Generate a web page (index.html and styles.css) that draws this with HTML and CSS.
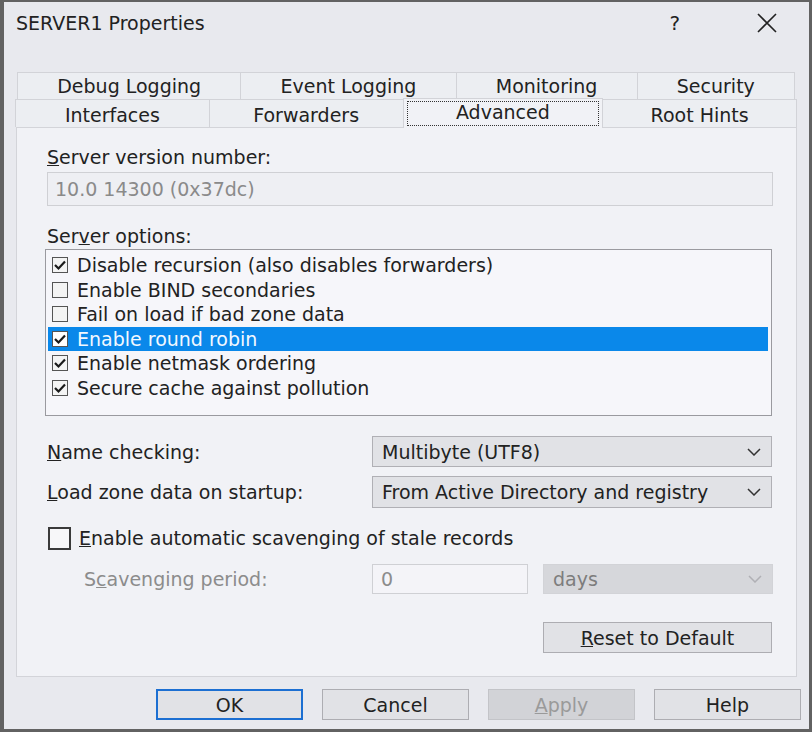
FILE: index.html
```html
<!DOCTYPE html>
<html lang="en">
<head>
    <meta charset="UTF-8">
    <title>SERVER1 Properties</title>
    <link rel="stylesheet" href="styles.css">
</head>
<body>
    <div class="window">
        <div class="titlebar">
            <span class="title">SERVER1 Properties</span>
            <span class="title-help">?</span>
            <span class="title-close">
                <svg width="22" height="22" viewBox="0 0 22 22"><path d="M2 2 L20 20 M20 2 L2 20" stroke="#222" stroke-width="1.6" fill="none"/></svg>
            </span>
        </div>

        <div class="tabs">
            <div class="tab-row back">
                <div class="tab">Debug Logging</div>
                <div class="tab">Event Logging</div>
                <div class="tab">Monitoring</div>
                <div class="tab">Security</div>
            </div>
            <div class="tab-row front">
                <div class="tab">Interfaces</div>
                <div class="tab">Forwarders</div>
                <div class="tab selected"><span class="focus-ring">Advanced</span></div>
                <div class="tab">Root Hints</div>
            </div>
        </div>

        <div class="panel">
            <div class="field-label"><u>S</u>erver version number:</div>
            <div class="version-box">10.0 14300 (0x37dc)</div>

            <div class="field-label options-label">Ser<u>v</u>er options:</div>
            <div class="option-list">
                <div class="option"><span class="cb checked"><svg width="14" height="14" viewBox="0 0 14 14"><path d="M2 7 L5.5 10.5 L12 3.5" stroke="#1a1a1a" stroke-width="2.2" fill="none"/></svg></span>Disable recursion (also disables forwarders)</div>
                <div class="option"><span class="cb"></span>Enable BIND secondaries</div>
                <div class="option"><span class="cb"></span>Fail on load if bad zone data</div>
                <div class="option active"><span class="cb checked"><svg width="14" height="14" viewBox="0 0 14 14"><path d="M2 7 L5.5 10.5 L12 3.5" stroke="#1a1a1a" stroke-width="2.2" fill="none"/></svg></span>Enable round robin</div>
                <div class="option"><span class="cb checked"><svg width="14" height="14" viewBox="0 0 14 14"><path d="M2 7 L5.5 10.5 L12 3.5" stroke="#1a1a1a" stroke-width="2.2" fill="none"/></svg></span>Enable netmask ordering</div>
                <div class="option"><span class="cb checked"><svg width="14" height="14" viewBox="0 0 14 14"><path d="M2 7 L5.5 10.5 L12 3.5" stroke="#1a1a1a" stroke-width="2.2" fill="none"/></svg></span>Secure cache against pollution</div>
            </div>

            <div class="form-row first">
                <span class="row-label"><u>N</u>ame checking:</span>
                <div class="combo">
                    <span>Multibyte (UTF8)</span>
                    <svg class="chevron" width="14" height="8" viewBox="0 0 14 8"><path d="M1 1 L7 7 L13 1" stroke="#333" stroke-width="1.5" fill="none"/></svg>
                </div>
            </div>
            <div class="form-row second">
                <span class="row-label"><u>L</u>oad zone data on startup:</span>
                <div class="combo">
                    <span>From Active Directory and registry</span>
                    <svg class="chevron" width="14" height="8" viewBox="0 0 14 8"><path d="M1 1 L7 7 L13 1" stroke="#333" stroke-width="1.5" fill="none"/></svg>
                </div>
            </div>

            <div class="scavenge-check">
                <span class="big-cb"></span><u>E</u>nable automatic scavenging of stale records
            </div>

            <div class="form-row scavenge">
                <span class="row-label muted">S<u>c</u>avenging period:</span>
                <div class="period-box">0</div>
                <div class="combo disabled">
                    <span>days</span>
                    <svg class="chevron" width="14" height="8" viewBox="0 0 14 8"><path d="M1 1 L7 7 L13 1" stroke="#b0b0b5" stroke-width="1.5" fill="none"/></svg>
                </div>
            </div>

            <button class="btn reset-button"><u>R</u>eset to Default</button>
        </div>

        <div class="footer">
            <button class="btn default">OK</button>
            <button class="btn">Cancel</button>
            <button class="btn disabled"><u>A</u>pply</button>
            <button class="btn">Help</button>
        </div>
    </div>
</body>
</html>
```

FILE: styles.css
```css
* {
    box-sizing: border-box;
}

body {
    margin: 0;
    background-color: #5f5f5f;
    font-family: "DejaVu Sans", sans-serif;
    font-size: 19px;
    color: #222;
}

.window {
    width: 812px;
    height: 732px;
    border: 3px solid #626262;
    border-top-width: 2px;
    border-left-width: 4px;
    background-color: #e8e9ee;
    display: flex;
    flex-direction: column;
}

.titlebar {
    height: 42px;
    display: flex;
    align-items: center;
    padding-left: 12px;
}

.title {
    flex: 1;
    font-size: 19px;
}

.title-help {
    font-size: 20px;
    margin-right: 76px;
}

.title-close {
    display: flex;
    margin-right: 31px;
}

/* tabs */
.tabs {
    margin: 28px 12px 0 12px;
}

.tab-row {
    display: flex;
}

.tab-row.back {
    height: 27px;
    margin: 0 2px;
}

.tab-row.front {
    height: 28px;
}

.tab {
    flex: 1 1 auto;
    display: flex;
    align-items: center;
    justify-content: center;
    border: 1px solid #d2d3d8;
    border-bottom: none;
    margin-left: -1px;
    background-color: #eceef2;
}

.tab-row.back .tab {
    padding: 0 2px;
}

.tab-row.front .tab {
    flex: 1 1 0;
    padding-top: 2px;
}

.tab.selected {
    background-color: #f1f2f6;
    margin-top: -1px;
    margin-bottom: -1px;
    padding: 1px 3px 2px;
    position: relative;
    z-index: 1;
}

.focus-ring {
    flex: 1;
    height: 100%;
    display: flex;
    align-items: center;
    justify-content: center;
    border: 1px dotted #333;
    padding-bottom: 3px;
}

/* panel */
.panel {
    margin: 0 12px 0 12px;
    height: 550px;
    border: 1px solid #d3d4d9;
    background-color: #f1f2f6;
    padding: 18px 23px 0 30px;
    display: flex;
    flex-direction: column;
}

.field-label {
    line-height: 22px;
}

.version-box {
    margin-top: 4px;
    height: 34px;
    border: 1px solid #cfd0d4;
    background-color: #eeeff3;
    color: #8a8a8a;
    padding-left: 7px;
    display: flex;
    align-items: center;
}

.options-label {
    margin-top: 19px;
}

.option-list {
    margin: 2px 1px 0 -2px;
    height: 167px;
    border: 1px solid #9a9a9f;
    background-color: #f6f6fa;
    padding: 3px 3px 0 2px;
}

.option {
    height: 24.5px;
    display: flex;
    align-items: center;
    padding-left: 4px;
    font-size: 19px;
}

.option.active {
    background-color: #0a88ea;
    color: #f2f8ff;
}

.cb {
    width: 16px;
    height: 16px;
    border: 1px solid #555;
    background-color: #f4f4f4;
    margin-right: 9px;
    display: flex;
    align-items: center;
    justify-content: center;
}

.option.active .cb {
    background-color: #fff;
}

.form-row {
    display: flex;
    align-items: center;
}

.form-row.first {
    margin-top: 20px;
}

.form-row.second {
    margin-top: 9px;
}

.row-label {
    width: 325px;
}

.muted {
    color: #8c8c8c;
    padding-left: 37px;
}

.combo {
    flex: 1;
    height: 31px;
    margin-right: 1px;
    border: 1px solid #b0b0b5;
    background-color: #e1e2e6;
    padding: 0 10px 0 9px;
    display: flex;
    align-items: center;
    justify-content: space-between;
}

.form-row.second .combo {
    height: 32px;
}

.combo.disabled {
    margin-left: 15px;
    margin-right: 0;
    height: 30px;
    border-color: #d2d3d7;
    background-color: #d6d7db;
    color: #7d7d7d;
}

.scavenge-check {
    margin-top: 18px;
    display: flex;
    align-items: center;
    height: 24px;
}

.big-cb {
    width: 23px;
    height: 23px;
    border: 2px solid #3a3a3a;
    background-color: #f7f7f9;
    margin: 0 8px 0 1px;
}

.form-row.scavenge {
    margin-top: 14px;
}

.period-box {
    width: 156px;
    height: 30px;
    border: 1px solid #cfd0d4;
    background-color: #f4f4f8;
    color: #8c8c8c;
    padding-left: 8px;
    display: flex;
    align-items: center;
}

/* buttons */
.btn {
    font-family: "DejaVu Sans", sans-serif;
    font-size: 19px;
    color: #222;
    height: 31px;
    border: 1px solid #adadb2;
    background-color: #e1e2e6;
    padding: 0;
}

.reset-button {
    align-self: flex-end;
    width: 229px;
    margin: 28px 1px 0 0;
}

.footer {
    margin-top: 12px;
    display: flex;
    justify-content: flex-end;
    gap: 19px;
    padding-right: 8px;
}

.footer .btn {
    width: 147px;
}

.btn.default {
    border: 2px solid #1c6fd2;
}

.btn.disabled {
    background-color: #d2d3d7;
    border-color: #c3c4c8;
    color: #9a9a9a;
}
```
